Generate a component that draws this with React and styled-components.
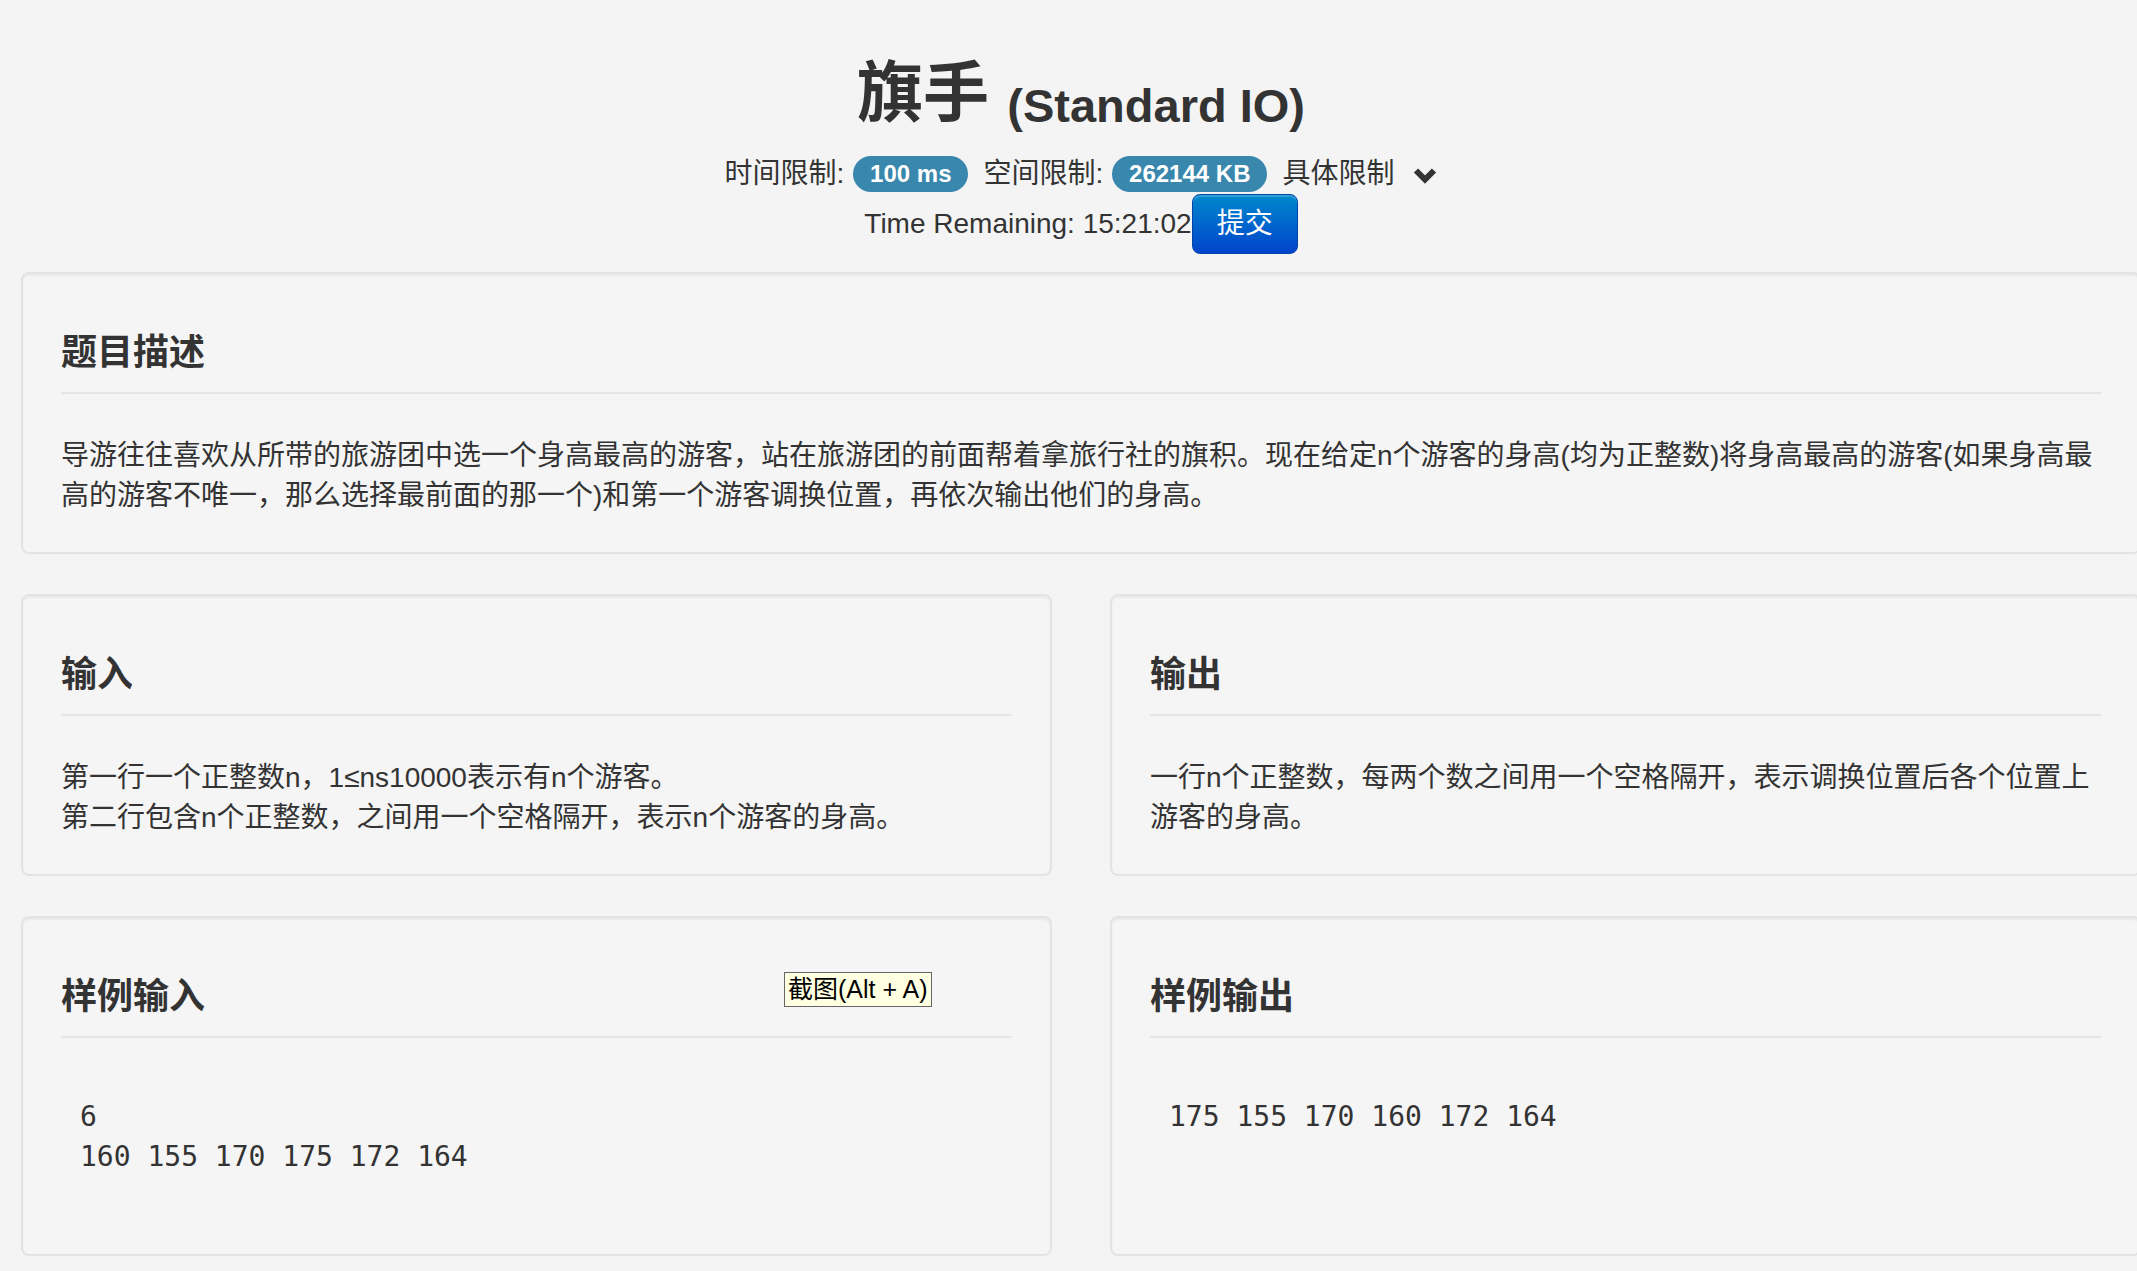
import React from "react";
import styled, { createGlobalStyle } from "styled-components";

const GlobalStyle = createGlobalStyle`
  body {
    margin: 0;
    background: #f4f4f4;
    color: #333;
    font-family: "Liberation Sans", "Noto Sans CJK SC", sans-serif;
    font-size: 28px;
    line-height: 40px;
    overflow-x: hidden;
  }
`;

const Page = styled.div`
  width: 2120px;
  padding-left: 21px;
`;

const Header = styled.header`
  text-align: center;
  padding-top: 45px;
  margin-bottom: 18px;
`;

const Title = styled.h1`
  margin: 0;
  font-size: 66px;
  line-height: 96px;
  font-weight: bold;
  color: #333;
`;

const Small = styled.small`
  font-size: 47px;
  font-weight: bold;
  vertical-align: -6px;
`;

const LimitRow = styled.div`
  line-height: 40px;
`;

const Badge = styled.span`
  display: inline-block;
  margin: 0 15px 0 1px;
  padding: 0 17px;
  height: 36px;
  line-height: 36px;
  border-radius: 18px;
  background: #3a87ad;
  color: #fff;
  font-size: 24px;
  font-weight: bold;
  vertical-align: 1px;
`;

const Chevron = styled.svg`
  width: 24px;
  height: 18px;
  margin-left: 19px;
  vertical-align: -1px;
`;

const TimeRow = styled.div`
  line-height: 40px;
`;

const SubmitButton = styled.button`
  display: inline-block;
  height: 60px;
  padding: 0 24px;
  border: 1px solid #0044aa;
  border-radius: 8px;
  background: linear-gradient(#0088cc, #0044cc);
  color: #fff;
  font-family: "Liberation Sans", "Noto Sans CJK SC", sans-serif;
  font-size: 28px;
  line-height: 40px;
  box-shadow: inset 0 2px 0 rgba(255, 255, 255, 0.2);
  cursor: pointer;
`;

const Well = styled.section`
  position: relative;
  box-sizing: border-box;
  background: #f5f5f5;
  border: 2px solid #e3e3e3;
  border-radius: 8px;
  box-shadow: inset 0 2px 2px rgba(0, 0, 0, 0.05);
  padding: 38px;
  margin-bottom: 40px;
`;

const Row = styled.div`
  display: grid;
  grid-template-columns: 1fr 1fr;
  column-gap: 58px;
`;

const CardTitle = styled.h4`
  margin: 20px 0 42px;
  padding-bottom: 18px;
  border-bottom: 2px solid #e6e6e6;
  font-size: 36px;
  line-height: 42px;
  font-weight: bold;
  color: #333;
`;

const Text = styled.p`
  margin: 0 0 -2px;
  line-height: 40px;
`;

const Sample = styled.pre`
  margin: -2px 0 20px;
  padding: 19px;
  font-family: "DejaVu Sans Mono", "Liberation Mono", monospace;
  font-size: 28px;
  line-height: 40px;
  color: #333;
  white-space: pre;
`;

const Tip = styled.div`
  position: absolute;
  left: 761px;
  top: 54px;
  padding: 0 3px;
  border: 1px solid #666;
  background: #ffffe1;
  color: #000;
  font-size: 25px;
  line-height: 33px;
`;

function Card({ title, children, tip }) {
  return (
    <Well>
      <CardTitle>{title}</CardTitle>
      {children}
      {tip && <Tip>{tip}</Tip>}
    </Well>
  );
}

export default function App() {
  return (
    <>
      <GlobalStyle />
      <Page>
        <Header>
          <Title>
            旗手 <Small>(Standard IO)</Small>
          </Title>
          <LimitRow>
            时间限制: <Badge>100 ms</Badge>空间限制: <Badge>262144 KB</Badge>具体限制
            <Chevron viewBox="0 0 24 18">
              <path d="M3 4.5 L12 13.5 L21 4.5" fill="none" stroke="#333" strokeWidth="6" />
            </Chevron>
          </LimitRow>
          <TimeRow>
            Time Remaining: 15:21:02<SubmitButton>提交</SubmitButton>
          </TimeRow>
        </Header>

        <Card title="题目描述">
          <Text>
            导游往往喜欢从所带的旅游团中选一个身高最高的游客，站在旅游团的前面帮着拿旅行社的旗积。现在给定n个游客的身高(均为正整数)将身高最高的游客(如果身高最高的游客不唯一，那么选择最前面的那一个)和第一个游客调换位置，再依次输出他们的身高。
          </Text>
        </Card>

        <Row>
          <Card title="输入">
            <Text>
              第一行一个正整数n，1≤ns10000表示有n个游客。
              <br />
              第二行包含n个正整数，之间用一个空格隔开，表示n个游客的身高。
            </Text>
          </Card>
          <Card title="输出">
            <Text>一行n个正整数，每两个数之间用一个空格隔开，表示调换位置后各个位置上游客的身高。</Text>
          </Card>
        </Row>

        <Row>
          <Card title="样例输入" tip="截图(Alt + A)">
            <Sample>{"6\n160 155 170 175 172 164"}</Sample>
          </Card>
          <Card title="样例输出">
            <Sample>{"175 155 170 160 172 164"}</Sample>
          </Card>
        </Row>
      </Page>
    </>
  );
}
